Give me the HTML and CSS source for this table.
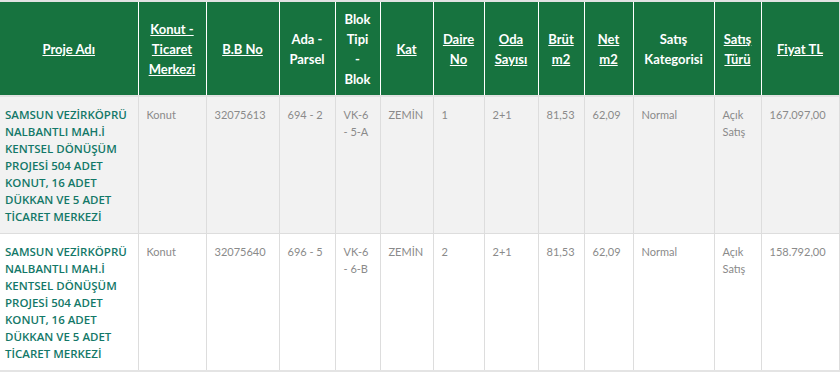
FILE: index.html
```html
<!DOCTYPE html>
<html lang="tr">
<head>
<meta charset="utf-8">
<title>Projeler</title>
<link rel="stylesheet" href="styles.css">
</head>
<body>
<table class="list">
  <colgroup>
    <col class="c1"><col class="c2"><col class="c3"><col class="c4"><col class="c5"><col class="c6"><col class="c7">
    <col class="c8"><col class="c9"><col class="c10"><col class="c11"><col class="c12"><col class="c13">
  </colgroup>
  <thead>
    <tr>
      <th><a href="#">Proje Adı</a></th>
      <th><a href="#">Konut - Ticaret Merkezi</a></th>
      <th><a href="#">B.B No</a></th>
      <th>Ada - Parsel</th>
      <th>Blok Tipi - Blok</th>
      <th><a href="#">Kat</a></th>
      <th><a href="#">Daire No</a></th>
      <th><a href="#">Oda Sayısı</a></th>
      <th><a href="#">Brüt m2</a></th>
      <th><a href="#">Net m2</a></th>
      <th>Satış Kategorisi</th>
      <th><a href="#">Satış Türü</a></th>
      <th><a href="#">Fiyat TL</a></th>
    </tr>
  </thead>
  <tbody>
    <tr class="odd">
      <td class="name">SAMSUN VEZİRKÖPRÜ NALBANTLI MAH.İ KENTSEL DÖNÜŞÜM PROJESİ 504 ADET KONUT, 16 ADET DÜKKAN VE 5 ADET TİCARET MERKEZİ</td>
      <td>Konut</td>
      <td>32075613</td>
      <td>694 - 2</td>
      <td>VK-6 - 5-A</td>
      <td>ZEMİN</td>
      <td>1</td>
      <td>2+1</td>
      <td>81,53</td>
      <td>62,09</td>
      <td>Normal</td>
      <td>Açık Satış</td>
      <td>167.097,00</td>
    </tr>
    <tr class="even">
      <td class="name">SAMSUN VEZİRKÖPRÜ NALBANTLI MAH.İ KENTSEL DÖNÜŞÜM PROJESİ 504 ADET KONUT, 16 ADET DÜKKAN VE 5 ADET TİCARET MERKEZİ</td>
      <td>Konut</td>
      <td>32075640</td>
      <td>696 - 5</td>
      <td>VK-6 - 6-B</td>
      <td>ZEMİN</td>
      <td>2</td>
      <td>2+1</td>
      <td>81,53</td>
      <td>62,09</td>
      <td>Normal</td>
      <td>Açık Satış</td>
      <td>158.792,00</td>
    </tr>
  </tbody>
</table>
</body>
</html>
```

FILE: styles.css
```css
html, body {
  margin: 0;
  padding: 0;
  background: #ffffff;
}

body {
  font-family: "Lato", "Noto Sans", sans-serif;
}

.list {
  width: 839px;
  table-layout: fixed;
  border-collapse: collapse;
  border-top: 2px solid #e2e2e2;
  border-right: 1px solid #dddddd;
  border-bottom: 2px solid #e4e4e4;
}

.c1 { width: 138px; }
.c2 { width: 68px; }
.c3 { width: 73px; }
.c4 { width: 56px; }
.c5 { width: 45px; }
.c6 { width: 53px; }
.c7 { width: 51px; }
.c8 { width: 54px; }
.c9 { width: 46px; }
.c10 { width: 49px; }
.c11 { width: 81px; }
.c12 { width: 47px; }
.c13 { width: 78px; }

.list th {
  background: #17733f;
  color: #ffffff;
  font-size: 13px;
  font-weight: 700;
  line-height: 20px;
  height: 95px;
  padding: 0 8px;
  text-align: center;
  vertical-align: middle;
  border-left: 1px solid #ffffff;
  box-sizing: border-box;
}

.list th:first-child {
  border-left: 0;
}

.list th a {
  color: #ffffff;
  text-decoration: underline;
}

.list td {
  font-size: 11px;
  line-height: 17px;
  color: #8a8a8a;
  padding: 9px 6px 8px 8px;
  vertical-align: top;
  border-left: 1px solid #dddddd;
  border-top: 1px solid #dddddd;
  word-wrap: break-word;
}

.list tbody tr:first-child td {
  border-top: 2px solid #e2e2e2;
}

.list td.name {
  border-left: 0;
  padding-left: 5px;
  padding-right: 3px;
  color: #137868;
  font-family: "Open Sans", "Noto Sans", sans-serif;
  font-size: 11.5px;
  font-weight: 600;
}

.odd td {
  background: #f2f2f2;
}

.even td {
  background: #ffffff;
}
```
